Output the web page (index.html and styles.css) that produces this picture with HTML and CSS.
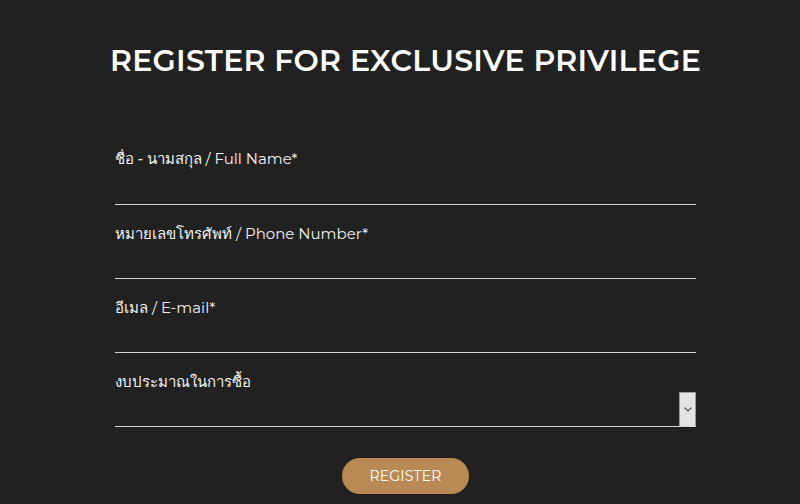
FILE: index.html
```html
<!DOCTYPE html>
<html lang="th">
<head>
<meta charset="utf-8">
<link rel="stylesheet" href="styles.css">
</head>
<body>
<main class="page">
  <h1 class="title">REGISTER FOR EXCLUSIVE PRIVILEGE</h1>
  <form class="form">
    <div class="field">
      <label class="label"><span class="th">ชื่อ - นามสกุล</span> / Full Name*</label>
      <input class="input" type="text">
    </div>
    <div class="field">
      <label class="label"><span class="th">หมายเลขโทรศัพท์</span> / Phone Number*</label>
      <input class="input" type="text">
    </div>
    <div class="field">
      <label class="label"><span class="th">อีเมล</span> / E-mail*</label>
      <input class="input" type="text">
    </div>
    <div class="field">
      <label class="label"><span class="th">งบประมาณในการซื้อ</span></label>
      <div class="select">
        <span class="select-value"></span>
        <span class="select-arrow">
          <svg width="8" height="5" viewBox="0 0 8 5"><path d="M0.5 0.5 L4 4 L7.5 0.5" fill="none" stroke="#555" stroke-width="1.2"/></svg>
        </span>
      </div>
    </div>
    <div class="actions">
      <button type="button" class="btn">REGISTER</button>
    </div>
  </form>
</main>
</body>
</html>
```
FILE: styles.css
```css
html, body {
  margin: 0;
  padding: 0;
  background: #212121;
  height: 100%;
  overflow: hidden;
}
.page {
  padding-left: 11px;
  padding-top: 42px;
  font-family: "Montserrat", "Inter", "Noto Sans", sans-serif;
  color: #fff;
}
.title {
  margin: 0;
  text-align: center;
  font-size: 30px;
  font-weight: 600;
  letter-spacing: 0.3px;
  line-height: 38px;
}
.form {
  width: 581px;
  margin: 50px auto 0;
}
.field {
  display: flex;
  flex-direction: column;
  height: 74px;
}
.field:first-child { height: 75px; }
.label {
  margin-top: 18px;
  font-family: "Montserrat", "Noto Sans", sans-serif;
  font-size: 15px;
  line-height: 20px;
  color: #f2f2f2;
}
.th {
  font-family: "Noto Sans", sans-serif;
  font-size: 15px;
  font-weight: 500;
}
.input {
  margin-top: auto;
  background: transparent;
  border: 0;
  border-bottom: 1px solid #d4d4d4;
  height: 34px;
  padding: 0;
  outline: none;
  color: #fff;
}
.select {
  margin-top: auto;
  display: flex;
  height: 34px;
  border-bottom: 1px solid #d4d4d4;
}
.select-value { flex: 1; }
.select-arrow {
  width: 15px;
  background: #e3e3e3;
  border: 1px solid #9a9a9a;
  border-bottom: 0;
  display: flex;
  align-items: center;
  justify-content: center;
}
.actions {
  display: flex;
  justify-content: center;
  margin-top: 31px;
}
.btn {
  width: 127px;
  height: 36px;
  border: 0;
  border-radius: 18px;
  background: #b98a55;
  color: #fff;
  font-family: "Montserrat", "Inter", "Noto Sans", sans-serif;
  font-size: 14px;
  letter-spacing: 0.2px;
}
```
